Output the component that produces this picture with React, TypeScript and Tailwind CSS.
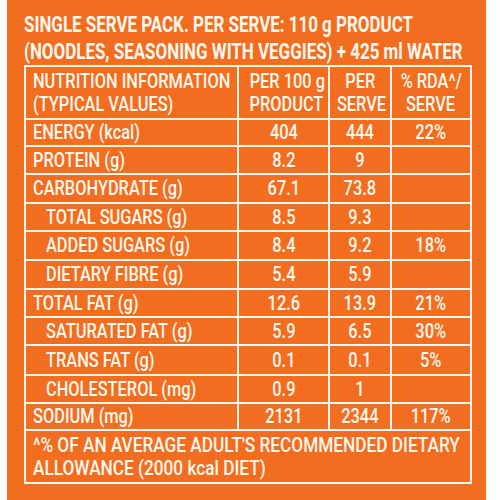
import React from "react";

const rows: { label: string; sub?: boolean; a: string; b: string; c: string; h: number }[] = [
  { label: "ENERGY (kcal)", a: "404", b: "444", c: "22%", h: 27 },
  { label: "PROTEIN (g)", a: "8.2", b: "9", c: "", h: 28 },
  { label: "CARBOHYDRATE (g)", a: "67.1", b: "73.8", c: "", h: 29 },
  { label: "TOTAL SUGARS (g)", sub: true, a: "8.5", b: "9.3", c: "", h: 28 },
  { label: "ADDED SUGARS (g)", sub: true, a: "8.4", b: "9.2", c: "18%", h: 29 },
  { label: "DIETARY FIBRE (g)", sub: true, a: "5.4", b: "5.9", c: "", h: 29 },
  { label: "TOTAL FAT (g)", a: "12.6", b: "13.9", c: "21%", h: 28 },
  { label: "SATURATED FAT (g)", sub: true, a: "5.9", b: "6.5", c: "30%", h: 28 },
  { label: "TRANS FAT (g)", sub: true, a: "0.1", b: "0.1", c: "5%", h: 30 },
  { label: "CHOLESTEROL (mg)", sub: true, a: "0.9", b: "1", c: "", h: 28 },
  { label: "SODIUM (mg)", a: "2131", b: "2344", c: "117%", h: 27 },
];

const font = { fontFamily: "Roboto, 'Liberation Sans', sans-serif" };

function L({ children }: { children: React.ReactNode }) {
  return <span className="inline-block whitespace-nowrap origin-left scale-x-[0.78]">{children}</span>;
}
function C({ children }: { children: React.ReactNode }) {
  return <span className="inline-block whitespace-nowrap origin-center scale-x-[0.78]">{children}</span>;
}

const cell = "border-2 border-[#fff8ee] p-0";

export default function App() {
  return (
    <div className="w-[500px] h-[500px] bg-[#fdfdfc] flex overflow-hidden">
      <div
        className="ml-[7px] w-[479px] h-full bg-[#f26d1f] text-[#fff8ee] pl-[17px] pt-[11px]"
        style={font}
      >
        <div className="text-[22px] leading-[27px] font-bold">
          <div><span className="inline-block whitespace-nowrap origin-left scale-x-[0.77]">SINGLE SERVE PACK. PER SERVE: 110 g PRODUCT</span></div>
          <div><span className="inline-block whitespace-nowrap origin-left scale-x-[0.77]">(NOODLES, SEASONING WITH VEGGIES) + 425 ml WATER</span></div>
        </div>
        <table className="border-collapse w-[446px] table-fixed text-[21px] leading-[23px] font-medium">
          <colgroup>
            <col className="w-[213px]" />
            <col className="w-[91px]" />
            <col className="w-[62px]" />
            <col className="w-[80px]" />
          </colgroup>
          <tbody>
            <tr className="h-[53px]">
              <td className={`${cell} pl-[7px]`}>
                <L>NUTRITION INFORMATION</L><br /><L>(TYPICAL VALUES)</L>
              </td>
              <td className={`${cell} text-center`}><C>PER 100 g</C><br /><C>PRODUCT</C></td>
              <td className={`${cell} text-center`}><C>PER</C><br /><C>SERVE</C></td>
              <td className={`${cell} text-center`}><C>% RDA^/</C><br /><C>SERVE</C></td>
            </tr>
            {rows.map((r) => (
              <tr key={r.label} style={{ height: r.h }}>
                <td className={`${cell} ${r.sub ? "pl-[20px]" : "pl-[7px]"}`}><L>{r.label}</L></td>
                <td className={`${cell} text-center`}><C>{r.a}</C></td>
                <td className={`${cell} text-center`}><C>{r.b}</C></td>
                <td className={`${cell} text-center`}><C>{r.c}</C></td>
              </tr>
            ))}
            <tr className="h-[53px]">
              <td colSpan={4} className={`${cell} pl-[7px]`}>
                <span className="inline-block whitespace-nowrap origin-left scale-x-[0.82]">^% OF AN AVERAGE ADULT'S RECOMMENDED DIETARY</span><br />
                <span className="inline-block whitespace-nowrap origin-left scale-x-[0.82]">ALLOWANCE (2000 kcal DIET)</span>
              </td>
            </tr>
          </tbody>
        </table>
      </div>
    </div>
  );
}
